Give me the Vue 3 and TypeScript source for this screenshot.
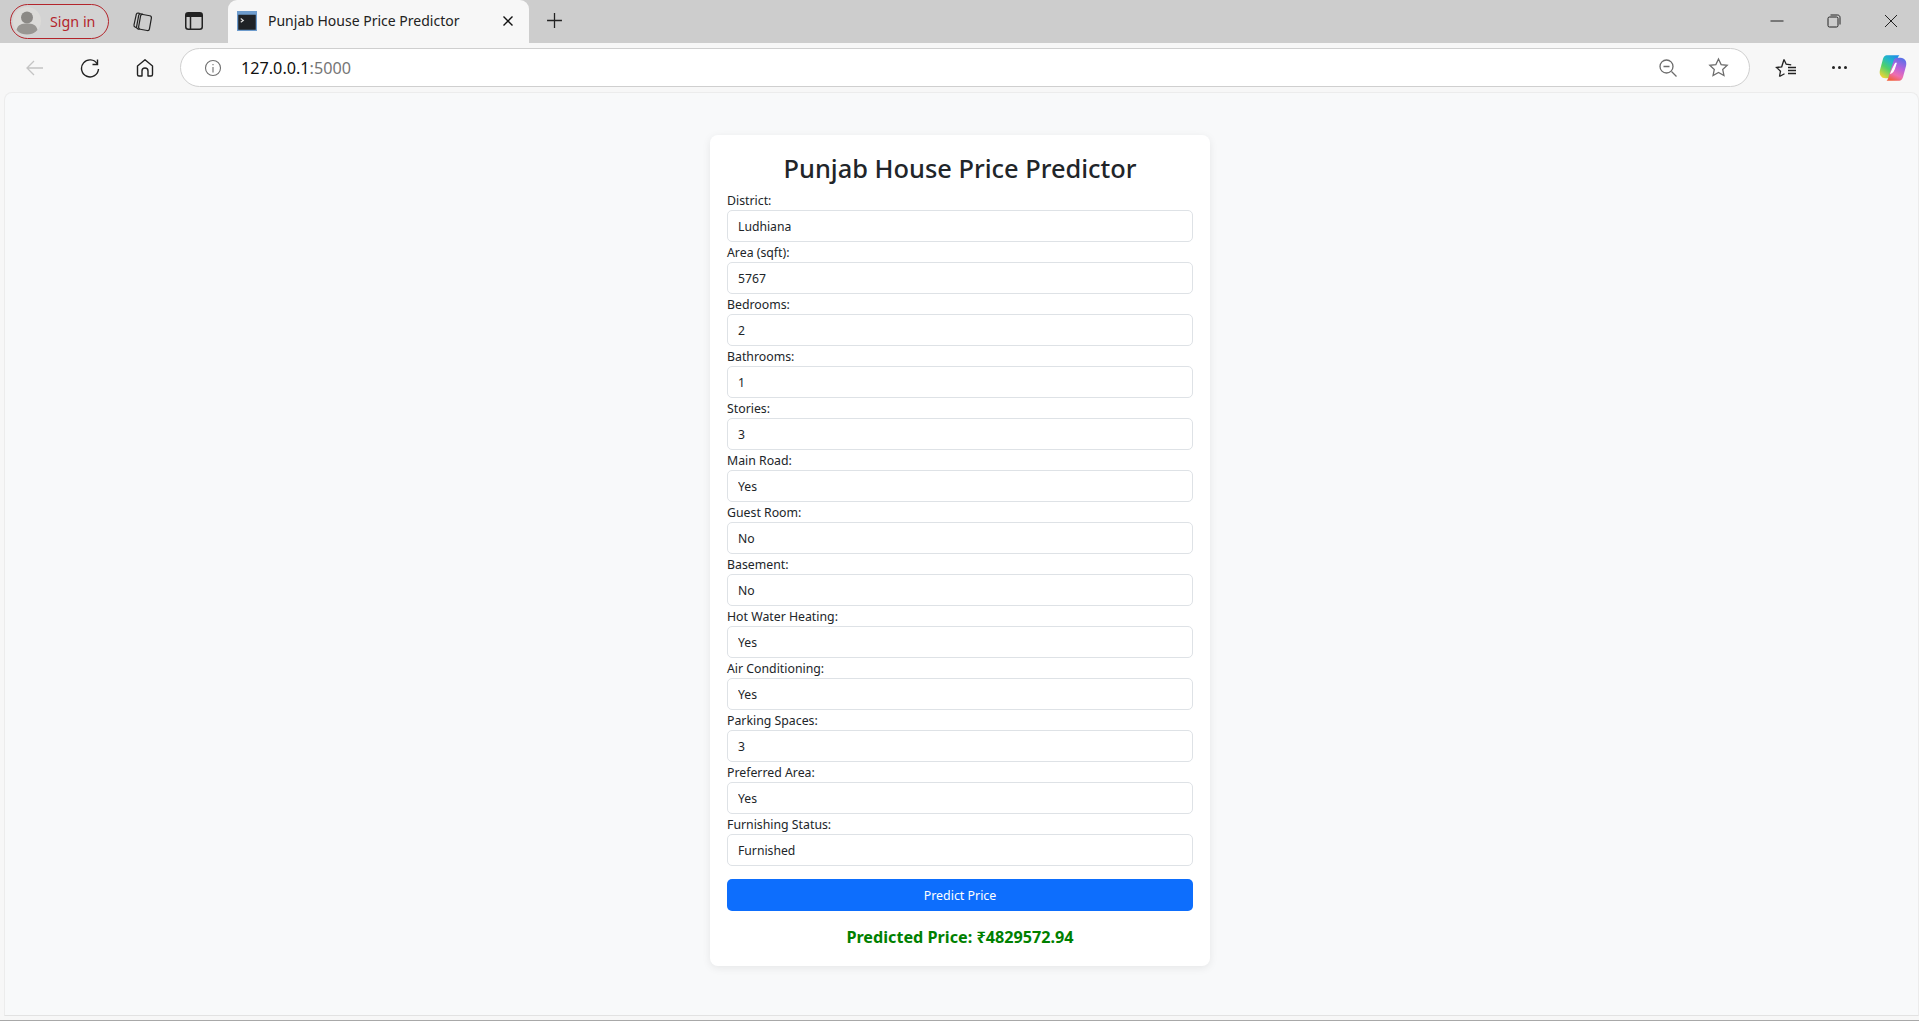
<template>
  <div class="window">
    <div class="tabstrip">
      <button class="signin">
        <svg class="avatar" viewBox="0 0 28 28" width="28" height="28">
          <circle cx="14" cy="14" r="14" fill="#dcdbd8" />
          <circle cx="14" cy="10.500" r="6" fill="#8b8985" />
          <path d="M3.500 23c1-5.500 5.500-6.500 10.500-6.500s9.500 1 10.500 6.500c-2.500 3-6.500 4.500-10.500 4.500s-8-1.500-10.500-4.500z" fill="#989692" />
        </svg>
        <span>Sign in</span>
      </button>
      <svg class="collections" viewBox="0 0 22 22" width="22" height="22" fill="none" stroke="#222" stroke-width="1.200">
        <rect x="8.500" y="5" width="11" height="15" rx="2" transform="rotate(10 14 12.500)" />
        <path d="M8.500 19.500 6.800 18.900C5.800 18.500 5.400 17.700 5.600 16.700L7.700 5.300C7.900 4.300 8.800 3.700 9.800 3.900L12 4.400" />
        <path d="M5.500 17.800 4 17C3.100 16.500 2.800 15.700 3 14.800L5.300 4.500C5.500 3.500 6.400 2.900 7.400 3.100L9 3.500" />
      </svg>
      <svg class="sidebar" viewBox="0 0 18 18" width="18" height="18" fill="none" stroke="#222" stroke-width="1.500">
        <rect x="0.750" y="0.750" width="16.500" height="16.500" rx="2.500" />
        <path d="M1 3h16" stroke-width="4" />
        <path d="M5.500 4v13" />
      </svg>
      <div class="tab">
        <svg class="favicon" viewBox="0 0 16 16" width="20" height="20">
          <rect width="16" height="16" fill="#6e9ccd" />
          <rect x="1" y="3" width="14" height="12" fill="#1f2226" />
          <path d="M3 6l2 1.500L3 9" fill="none" stroke="#ddd" stroke-width="1" />
        </svg>
        <span class="tab-title">Punjab House Price Predictor</span>
        <svg class="tab-close" viewBox="0 0 12 12" width="12" height="12" fill="none" stroke="#111" stroke-width="1.400">
          <path d="M1.500 1.500l9 9M10.500 1.500l-9 9" />
        </svg>
      </div>
      <svg class="new-tab" viewBox="0 0 16 16" width="17" height="17" fill="none" stroke="#222" stroke-width="1.200">
        <path d="M8 1v14M1 8h14" />
      </svg>
      <div class="win-controls">
        <svg viewBox="0 0 14 14" width="14" height="14" fill="none" stroke="#222" stroke-width="1">
          <path d="M0.500 7h13" />
        </svg>
        <svg viewBox="0 0 14 14" width="14" height="14" fill="none" stroke="#222" stroke-width="1">
          <rect x="1" y="3" width="10" height="10" rx="1.500" />
          <path d="M3.500 1h7c1.500 0 2.500 1 2.500 2.500v7" />
        </svg>
        <svg viewBox="0 0 14 14" width="14" height="14" fill="none" stroke="#222" stroke-width="1">
          <path d="M1 1l12 12M13 1L1 13" />
        </svg>
      </div>
    </div>

    <div class="toolbar">
      <svg class="nav-back" viewBox="0 0 20 20" width="20" height="20" fill="none" stroke="#c4c4c4" stroke-width="1.300">
        <path d="M18 10H2M9 3l-7 7 7 7" />
      </svg>
      <svg class="nav-reload" viewBox="0 0 20 20" width="20" height="20" fill="none" stroke="#222" stroke-width="1.400">
        <path d="M17.500 1.500v5h-5" />
        <path d="M17.300 6A8.500 8.500 0 1 0 18.500 11" />
      </svg>
      <svg class="nav-home" viewBox="0 0 20 20" width="20" height="20" fill="none" stroke="#222" stroke-width="1.400">
        <path d="M10 1.800 2.500 8v8.500A1.500 1.500 0 0 0 4 18h3v-5a3 3 0 0 1 6 0v5h3a1.500 1.500 0 0 0 1.500-1.500V8z" stroke-linejoin="round" />
      </svg>
      <div class="omnibox">
        <svg class="info" viewBox="0 0 18 18" width="18" height="18" fill="none" stroke="#6f6f6f" stroke-width="1.100">
          <circle cx="9" cy="9" r="7.500" />
          <path d="M9 8v5.500M9 5v1.300" />
        </svg>
        <span class="url">127.0.0.1<span class="port">:5000</span></span>
        <svg class="zoom-out" viewBox="0 0 20 20" width="20" height="20" fill="none" stroke="#6c6c6c" stroke-width="1.300">
          <circle cx="8.500" cy="8.500" r="6.500" />
          <path d="M5.500 8.500h6M13.500 13.500l5 5" />
        </svg>
        <svg class="star" viewBox="0 0 20 20" width="21" height="21" fill="none" stroke="#6c6c6c" stroke-width="1.200">
          <path d="M10 1.800l2.500 5.400 5.800.7-4.300 4 1.200 5.800-5.200-2.900-5.200 2.900 1.200-5.800-4.300-4 5.800-.7z" />
        </svg>
      </div>
      <svg class="favs" viewBox="0 0 22 20" width="22" height="20" fill="none" stroke="#222" stroke-width="1.300">
        <path d="M9 1.500l2.200 4.700 5 .6M4.500 18.500l1-5.300L1.500 9.500l5.200-.7L9 1.500M4.500 18.500l5-2.800" />
        <path d="M13 9.500h8M13 12.500h8M13 15.500h8" />
      </svg>
      <span class="more"><i></i><i></i><i></i></span>
      <svg class="copilot" viewBox="0 0 28 28" width="30" height="30">
        <defs>
          <linearGradient id="cpA" x1="0.800" y1="0" x2="0.200" y2="1">
            <stop offset="0" stop-color="#1f8fe6" />
            <stop offset="0.3" stop-color="#22b8c8" />
            <stop offset="0.6" stop-color="#4fd06a" />
            <stop offset="1" stop-color="#f0d535" />
          </linearGradient>
          <linearGradient id="cpB" x1="0.700" y1="0" x2="0.300" y2="1">
            <stop offset="0" stop-color="#5a70e8" />
            <stop offset="0.4" stop-color="#b862dc" />
            <stop offset="0.72" stop-color="#ee6fb0" />
            <stop offset="1" stop-color="#f2603c" />
          </linearGradient>
        </defs>
        <path d="M9 2C6 2 5 4 4.500 6L1.800 16C.8 20 3 23.500 7 23.500h3c2 0 3-1 3.500-3L18 6c.5-2 1-3 2-4z" fill="url(#cpA)" />
        <path d="M19 26c3 0 4-2 4.500-4l2.700-10c1-4-1.200-7.500-5.200-7.500h-3c-2 0-3 1-3.500 3L10 22c-.5 2-1 3-2 4z" fill="url(#cpB)" />
        <path d="M16.500 9.500c-1.500 2-3 6-4.500 9.500 1.500-.5 2.500-2 3.200-4l1.800-5.500z" fill="#fff" stroke="#fff" stroke-width="1" />
      </svg>
    </div>

    <div class="viewport">
      <main class="card">
        <h1 class="title">Punjab House Price Predictor</h1>
        <form class="form" @submit.prevent>
          <div v-for="field in fields" :key="field.label" class="field">
            <label class="label">{{ field.label }}:</label>
            <input class="control" type="text" readonly :value="field.value" />
          </div>
          <button class="predict" type="submit">Predict Price</button>
        </form>
        <p class="result">Predicted Price: ₹4829572.94</p>
      </main>
    </div>
  </div>
</template>

<script setup lang="ts">
interface Field {
  label: string;
  value: string;
}

const fields: Field[] = [
  { label: "District", value: "Ludhiana" },
  { label: "Area (sqft)", value: "5767" },
  { label: "Bedrooms", value: "2" },
  { label: "Bathrooms", value: "1" },
  { label: "Stories", value: "3" },
  { label: "Main Road", value: "Yes" },
  { label: "Guest Room", value: "No" },
  { label: "Basement", value: "No" },
  { label: "Hot Water Heating", value: "Yes" },
  { label: "Air Conditioning", value: "Yes" },
  { label: "Parking Spaces", value: "3" },
  { label: "Preferred Area", value: "Yes" },
  { label: "Furnishing Status", value: "Furnished" },
];
</script>

<style>
html,
body {
  margin: 0;
  background: #f7f7f7;
}
</style>

<style scoped>
.window {
  height: 1021px;
  display: flex;
  flex-direction: column;
  overflow: hidden;
  font-family: "Noto Sans", "Open Sans", sans-serif;
  color: #212529;
  background: #f7f7f7;
  border-bottom: 1px solid #a8a8a8;
  box-sizing: border-box;
}

/* browser chrome */
.tabstrip {
  height: 43px;
  flex: none;
  display: flex;
  align-items: center;
  background: #cdcdcd;
}

.signin {
  width: 99px;
  height: 35px;
  margin-left: 10px;
  margin-top: -1px;
  padding: 0 0 0 2px;
  display: flex;
  align-items: center;
  gap: 9px;
  border: 1.5px solid #b3252c;
  border-radius: 18px;
  background: #d3d3d3;
  color: #b3252c;
  font-family: inherit;
  font-size: 14.3px;
  box-sizing: border-box;
}

.avatar {
  flex: none;
}

.collections {
  margin-left: 22px;
  margin-top: -1px;
}

.sidebar {
  margin-left: 32px;
  margin-top: -1px;
}

.tab {
  width: 301px;
  height: 43px;
  margin-left: 25px;
  padding: 0 15px 2px 9px;
  display: flex;
  align-items: center;
  background: #f7f7f7;
  border-radius: 9px 9px 0 0;
  box-sizing: border-box;
}

.favicon {
  flex: none;
}

.tab-title {
  margin-left: 11px;
  flex: 1;
  font-size: 14px;
  white-space: nowrap;
  color: #222;
}

.tab-close {
  flex: none;
}

.new-tab {
  margin-left: 17px;
  margin-top: -2px;
}

.win-controls {
  margin-left: auto;
  margin-right: 21px;
  margin-top: -2px;
  display: flex;
  gap: 43px;
}

.toolbar {
  height: 49px;
  flex: none;
  display: flex;
  align-items: center;
  background: #f7f7f7;
}

.nav-back {
  margin-left: 25px;
}

.nav-reload {
  margin-left: 35px;
}

.nav-home {
  margin-left: 35px;
}

.omnibox {
  width: 1570px;
  height: 39px;
  margin-left: 25px;
  padding: 0 20px 0 23px;
  display: flex;
  align-items: center;
  background: #fff;
  border: 1px solid #cfcfcf;
  border-radius: 20px;
  box-sizing: border-box;
}

.url {
  margin-left: 19px;
  flex: 1;
  font-size: 16.2px;
  color: #111;
}

.port {
  color: #767676;
}

.star {
  margin-left: 30px;
}

.favs {
  margin-left: 25px;
}

.more {
  margin-left: 35px;
  display: flex;
  gap: 3px;
}

.more i {
  width: 3px;
  height: 3px;
  border-radius: 50%;
  background: #222;
}

.copilot {
  margin-left: 31px;
}

/* page */
.viewport {
  flex: 1;
  margin: 0 0 4px 4px;
  padding-top: 42px;
  display: flex;
  justify-content: center;
  align-items: flex-start;
  background: #f8f9fa;
  border-radius: 8px 8px 0 0;
  border: 1px solid #ececec;
  border-bottom-color: #e2e2e2;
  box-sizing: border-box;
}

.card {
  width: 500px;
  padding: 17px 17px 0;
  margin-left: -3px;
  height: 831px;
  background: #fff;
  border-radius: 8px;
  box-shadow: 0 2px 8px rgba(0, 0, 0, 0.08);
  box-sizing: border-box;
}

.title {
  margin: 0;
  height: 37px;
  line-height: 33px;
  font-size: 25.4px;
  font-weight: 500;
  text-align: center;
  white-space: nowrap;
}

.form {
  display: flex;
  flex-direction: column;
}

.label {
  display: block;
  height: 21px;
  line-height: 23px;
  font-size: 12.3px;
}

.control {
  display: block;
  width: 100%;
  height: 32px;
  margin-bottom: -1px;
  padding: 0 10px;
  border: 1px solid #dee2e6;
  border-radius: 5px;
  background: #fff;
  color: #212529;
  font-family: inherit;
  font-size: 12.2px;
  box-sizing: border-box;
  outline: none;
}

.predict {
  height: 32px;
  margin-top: 14px;
  border: none;
  border-radius: 5px;
  background: #0d6efd;
  color: #fff;
  font-family: inherit;
  font-size: 12.4px;
}

.result {
  margin: 16px 0 0;
  line-height: 21px;
  text-align: center;
  font-size: 16.2px;
  font-weight: 700;
  color: #008000;
}
</style>
